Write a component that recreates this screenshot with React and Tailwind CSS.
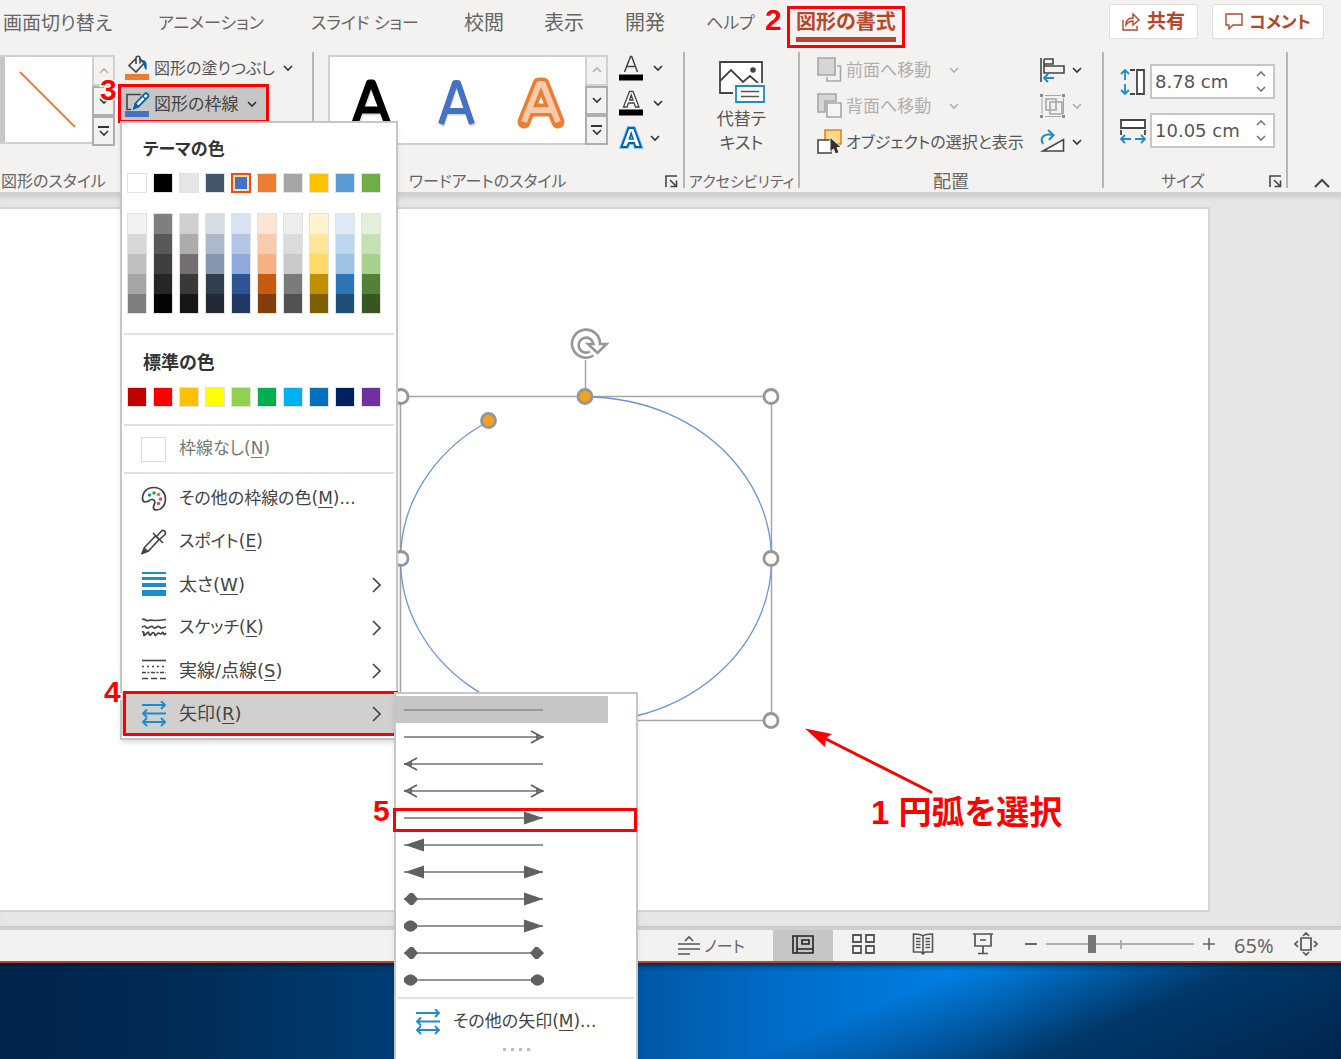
import React from "react";

const themeColors = [
  ["bg-white", "白"], ["bg-black", "黒"], ["bg-[#e7e6e6]", "薄い灰色"], ["bg-[#44546a]", "ブルーグレー"], ["bg-[#4472c4]", "青"],
  ["bg-[#ed7d31]", "オレンジ"], ["bg-[#a5a5a5]", "灰色"], ["bg-[#ffc000]", "ゴールド"], ["bg-[#5b9bd5]", "水色"], ["bg-[#70ad47]", "緑"],
];

const shades = [
  ["bg-[#f2f2f2]", "bg-[#d8d8d8]", "bg-[#bfbfbf]", "bg-[#a5a5a5]", "bg-[#7f7f7f]"],
  ["bg-[#7f7f7f]", "bg-[#595959]", "bg-[#3f3f3f]", "bg-[#262626]", "bg-[#040404]"],
  ["bg-[#d0cece]", "bg-[#aeabab]", "bg-[#757070]", "bg-[#3a3838]", "bg-[#171616]"],
  ["bg-[#d6dce4]", "bg-[#adb9ca]", "bg-[#8496b0]", "bg-[#323f4f]", "bg-[#222a35]"],
  ["bg-[#d9e2f3]", "bg-[#b4c6e7]", "bg-[#8eaadb]", "bg-[#2f5496]", "bg-[#1f3864]"],
  ["bg-[#fbe5d5]", "bg-[#f7cbac]", "bg-[#f4b183]", "bg-[#c55a11]", "bg-[#833c0b]"],
  ["bg-[#ededed]", "bg-[#dbdbdb]", "bg-[#c9c9c9]", "bg-[#7b7b7b]", "bg-[#525252]"],
  ["bg-[#fff2cc]", "bg-[#fee599]", "bg-[#ffd965]", "bg-[#bf9000]", "bg-[#7f6000]"],
  ["bg-[#deebf6]", "bg-[#bdd7ee]", "bg-[#9cc3e5]", "bg-[#2e75b5]", "bg-[#1e4e79]"],
  ["bg-[#e2efd9]", "bg-[#c5e0b3]", "bg-[#a8d08d]", "bg-[#538135]", "bg-[#375623]"],
];

const standardColors = [
  ["bg-[#c00000]", "濃い赤"], ["bg-[#ff0000]", "赤"], ["bg-[#ffc000]", "オレンジ"], ["bg-[#ffff00]", "黄"], ["bg-[#92d050]", "薄い緑"],
  ["bg-[#00b050]", "緑"], ["bg-[#00b0f0]", "薄い青"], ["bg-[#0070c0]", "青"], ["bg-[#002060]", "濃い青"], ["bg-[#7030a0]", "紫"],
];

const arrowStyles = [
  [null, null], [null, "open"], ["open", null], ["open", "open"], [null, "solid"], ["solid", null],
  ["solid", "solid"], ["diamond", "solid"], ["oval", "solid"], ["diamond", "diamond"], ["oval", "oval"],
];

function Chevron({ up = false, className = "text-[#333]" }) {
  return (
    <svg width="10" height="8" viewBox="0 0 10 8" fill="none" stroke="currentColor" strokeWidth="1.600" className={className} aria-hidden="true">
      <path d={up ? "M1 6 5 2l4 4" : "M1 2l4 4 4-4"} />
    </svg>
  );
}

function Callout({ className, children }) {
  return (
    <span className={`pointer-events-none absolute font-['Liberation_Sans',sans-serif] text-[30px] leading-[30px] font-bold text-[#ff0000] [paint-order:stroke] [-webkit-text-stroke:3px_white] ${className}`}>
      {children}
    </span>
  );
}

function Frame({ className }) {
  return <span className={`pointer-events-none absolute border-[3px] border-[#ff0000] ${className}`} />;
}

function Tab({ className, children }) {
  return (
    <button type="button" className={`shrink-0 text-left whitespace-nowrap ${className}`}>
      {children}
    </button>
  );
}

function GalleryScroll() {
  return (
    <div className="flex w-[23px] shrink-0 flex-col">
      <button type="button" aria-label="上へ" className="flex h-[31px] items-center justify-center border-2 border-[#d2d0ce]">
        <Chevron up className="text-[#b5b3b1]" />
      </button>
      <button type="button" aria-label="下へ" className="flex h-[30px] items-center justify-center border-2 border-[#b0aeac]">
        <Chevron />
      </button>
      <button type="button" aria-label="その他" className="flex h-[30px] flex-col items-center justify-center gap-[1px] border-2 border-[#b0aeac]">
        <span className="h-[2px] w-[11px] bg-[#333]" />
        <Chevron />
      </button>
    </div>
  );
}

function Launcher({ label }) {
  return (
    <button type="button" aria-label={label}>
      <svg width="13" height="13" viewBox="0 0 13 13" fill="none" stroke="#444" strokeWidth="1.6">
        <path d="M1 12V1h11M5 5l6 6M11.500 5.500v6h-6" />
      </svg>
    </button>
  );
}

function FillIcon() {
  return (
    <svg width="25" height="25" viewBox="0 0 25 25" fill="none" aria-hidden="true">
      <path d="M11 3.500 4 10.500l7 6.500 8-8.500-4.500-5.500M11 9V3.500c0-3 4-3 4 0V8.500" stroke="#444" strokeWidth="1.600" />
      <path d="M16.500 5c4-.5 6 2 5 10-2.500-1-2-4-3-6z" fill="#0063b1" />
      <path d="M0 19h24v6H0z" fill="#ed7d31" />
    </svg>
  );
}

function OutlineIcon() {
  return (
    <svg width="25" height="25" viewBox="0 0 25 25" fill="none" aria-hidden="true">
      <path d="M16 2.500H2v15h4" stroke="#444" strokeWidth="1.600" />
      <path d="M9 16.500l1.500-5L19.500 2c2-2 5 1 3.500 3l-9.500 9.500z" fill="#fff" stroke="#0063b1" strokeWidth="1.800" />
      <path d="M9 16.500l1.500-5 3 3zM17.500 4l3.500 3.500" fill="#0063b1" stroke="#0063b1" strokeWidth="1.400" />
      <path d="M0 19h24v6H0z" fill="#4472c4" />
    </svg>
  );
}

function LetterIcon({ kind }) {
  return (
    <svg width="26" height="26" viewBox="0 0 26 26" aria-hidden="true">
      {kind === "fill" && <path d="M6.500 17 12.500 1.500h1.200L19.500 17M8.500 11.500h9" fill="none" stroke="#444" strokeWidth="1.500" />}
      {kind === "outline" && <path d="M5.500 17 11.500 1.500h3.500L21 17h-3.500l-1.500-4h-5.500L9 17zM11.500 10h3.500l-1.800-5z" fill="#fff" stroke="#444" strokeWidth="1.300" />}
      {kind === "effect" && (
        <>
          <path d="M3.500 22 10.500 3h5.500l7 19h-5.500l-1.500-4h-5L9 22z" fill="none" stroke="#8cc8f5" strokeWidth="4" />
          <path d="M3.500 22 10.500 3h5.500l7 19h-5.500l-1.500-4h-5L9 22z" fill="#fff" stroke="#0063b1" strokeWidth="2" />
          <path d="M11.500 14h3.500l-1.800-5.500z" fill="#fff" stroke="#0063b1" strokeWidth="1.600" />
        </>
      )}
      {kind !== "effect" && <path d="M1 19.500h24v6H1z" fill="#000" />}
    </svg>
  );
}

function AltTextIcon() {
  return (
    <svg width="48" height="44" viewBox="0 0 48 44" fill="none" aria-hidden="true">
      <path d="M2 2h42v31H2z" fill="#fff" stroke="#444" strokeWidth="1.800" />
      <path d="M2 21 13 10l12 12 7-6 8 7" stroke="#444" strokeWidth="1.800" />
      <circle cx="35" cy="10" r="2.800" fill="#444" />
      <path d="M15 23h32v20H15z" fill="#f3f2f1" />
      <path d="M18 26h28v16H18z" fill="#fff" stroke="#1e8bcd" strokeWidth="1.800" />
      <path d="M23 31.500h18M23 36.500h18" stroke="#555" strokeWidth="1.500" />
    </svg>
  );
}

function ArrangeIcon({ kind }) {
  return (
    <svg width="25" height="26" viewBox="0 0 25 26" fill="none" strokeWidth="1.600" aria-hidden="true">
      {kind === "front" && (
        <>
          <path d="M1 1h17v17H1z" fill="#d6d6d6" stroke="#a6a6a6" />
          <path d="M20 9h3.500v15H10v-4" stroke="#a6a6a6" />
        </>
      )}
      {kind === "back" && (
        <>
          <path d="M1 1h18v7H8v11H1z" fill="#d6d6d6" stroke="#a6a6a6" />
          <path d="M10 10h14v14H10z" fill="#f5f5f5" stroke="#a6a6a6" />
        </>
      )}
      {kind === "pane" && (
        <>
          <path d="M8 1h16v14H8z" fill="#ffd98a" stroke="#e8821c" />
          <path d="M1 11h13v13H1z" fill="#fff" stroke="#444" />
          <path d="M13 8v15l3.500-3 2 5 3.500-1.500-2-5h4.500z" fill="#333" stroke="#f3f2f1" strokeWidth="1" />
        </>
      )}
      {kind === "align" && (
        <>
          <path d="M1 1v24M4 2h9v5H4M4 9h20v7H4V2" stroke="#444" />
          <path d="M14 21H4M8 17l-4 4 4 4" stroke="#1e8bcd" strokeWidth="2" />
        </>
      )}
      {kind === "group" && (
        <>
          <path d="M6 6h10v11H6zM10 9h12v12H10z" stroke="#a6a6a6" />
          <path d="M5 2.500h16M2 5v16M23.500 5v16M5 23.500h16" stroke="#a6a6a6" strokeWidth="1" />
          <path d="M0 1h3v3H0zM22 1h3v3h-3zM0 22h3v3H0zM22 22h3v3h-3z" fill="#8a8a8a" />
        </>
      )}
      {kind === "rotate" && (
        <>
          <path d="M3 22 23.500 10.500V22z" fill="#fff" stroke="#444" />
          <path d="M3 15C-1 8 5 4 13 6M8 1l5.500 5L9 11" stroke="#1e8bcd" strokeWidth="2" />
        </>
      )}
    </svg>
  );
}

function SizeIcon({ kind }) {
  return (
    <svg width="26" height="26" viewBox="0 0 26 26" fill="none" strokeWidth="1.800" aria-hidden="true">
      {kind === "height" ? (
        <>
          <path d="M17 1h7v24h-7z" fill="#fff" stroke="#444" />
          <path d="M10 1h5M10 25h5" stroke="#444" />
          <path d="M5 2v9M1 5l4-4 4 4M5 15v9M1 21l4 4 4-4" stroke="#1e8bcd" />
        </>
      ) : (
        <>
          <path d="M1 2h24v8H1z" fill="#fff" stroke="#444" />
          <path d="M1 12v5M25 12v5" stroke="#444" />
          <path d="M2 21h9M5 17l-4 4 4 4M15 21h9M21 17l4 4-4 4" stroke="#1e8bcd" />
        </>
      )}
    </svg>
  );
}

function Spinner({ id, label, kind, value }) {
  return (
    <div className="flex items-center">
      <label htmlFor={id} className="flex w-[30px]" title={label}>
        <SizeIcon kind={kind} />
      </label>
      <div className="flex h-[35px] w-[125px] border-2 border-[#c8c6c4] bg-white">
        <input id={id} aria-label={label} defaultValue={value} className="min-w-0 flex-1 pl-[3px] font-['DejaVu_Sans',sans-serif] text-[18px] text-[#555] outline-none" />
        <div className="flex w-[23px] flex-col justify-around pr-[2px]">
          <button type="button" aria-label={`${label}を増やす`} className="flex justify-center"><Chevron up className="text-[#777]" /></button>
          <button type="button" aria-label={`${label}を減らす`} className="flex justify-center"><Chevron className="text-[#777]" /></button>
        </div>
      </div>
    </div>
  );
}

function GroupLabel({ className = "justify-center text-[16px]", children }) {
  return <div className={`mt-auto flex h-[14px] items-center leading-[14px] whitespace-nowrap text-[#666] ${className}`}>{children}</div>;
}

function ArrangeRow({ kind, disabled, children, className }) {
  return (
    <button type="button" disabled={disabled} className={`flex h-[36px] items-center whitespace-nowrap ${disabled ? "text-[#b1afad]" : "text-[#555]"} ${className}`}>
      <span className="w-[29px] shrink-0"><ArrangeIcon kind={kind} /></span>
      {children}
      {disabled && <Chevron className="ml-[18px] text-[#b1afad]" />}
    </button>
  );
}

function Ribbon() {
  return (
    <div className="flex h-[142px] shrink-0 border-b-2 border-[#d4d2d0] pb-1">
      <section className="relative flex w-[314px] shrink-0 flex-col border-r-2 border-[#b8b6b4]">
        <div className="flex items-start pt-[3px]">
          <div className="flex h-[91px] w-[115px] shrink-0">
            <div className="flex h-[89px] min-w-0 flex-1 border-y-2 border-[#d2d0ce] bg-white">
              <span className="w-[5px] bg-[#c6c6c6]" />
              <svg width="86" height="85" viewBox="0 0 86 85" aria-hidden="true"><path d="M15 15 70 70" stroke="#ed7d31" strokeWidth="2" /></svg>
            </div>
            <GalleryScroll />
          </div>
          <div className="flex flex-col pl-[10px] text-[#555]">
            <button type="button" className="flex h-[30px] items-start text-[16px] whitespace-nowrap">
              <span className="w-[29px]"><FillIcon /></span>
              <span className="leading-[26px]">図形の塗りつぶし</span>
              <span className="pt-[9px] pl-[8px]"><Chevron /></span>
            </button>
            <div className="relative flex h-[38px] w-[145px] items-center">
              <span className="absolute inset-y-0 -left-[4px] w-[148px] bg-[#c6c6c6]" />
              <button type="button" aria-expanded="true" className="relative flex items-center text-[17px] whitespace-nowrap text-[#444]">
                <span className="w-[29px]"><OutlineIcon /></span>
                図形の枠線
                <Chevron className="ml-[9px] text-[#333]" />
              </button>
              <Frame className="-top-px -left-[7px] h-[39px] w-[151px]" />
            </div>
          </div>
        </div>
        <GroupLabel className="justify-start pl-[1px] text-[16px]">図形のスタイル</GroupLabel>
        <Callout className="top-[23px] left-[100px]">3</Callout>
      </section>

      <section className="flex w-[371px] shrink-0 flex-col border-r-2 border-[#b8b6b4] pl-[14px]">
        <div className="flex pt-[3px]">
          <div className="flex h-[90px] w-[280px]">
            <div className="flex h-[90px] min-w-0 flex-1 border-2 border-r-0 border-[#d2d0ce] bg-white">
              <svg width="255" height="86" viewBox="0 0 255 86" fill="none" aria-hidden="true">
                <g strokeLinejoin="round">
                  <path d="M25 66 39.500 26h3l15 40M30 53h23" stroke="#bbb" strokeWidth="7" opacity=".5" transform="translate(1 2)" />
                  <path d="M25 66 39.500 26h3l15 40M30 53h23" stroke="#000" strokeWidth="7" />
                  <path d="M111 67 125 26h3l14 41M116 54h21" stroke="#bbb" strokeWidth="5" opacity=".6" transform="translate(1 2)" />
                  <path d="M111 67 125 26h3l14 41M116 54h21" stroke="#4472c4" strokeWidth="6" />
                  <path d="M194 65 209 27h4l15 38M199 53h24" stroke="#ed7d31" strokeWidth="13" strokeLinecap="round" />
                  <path d="M194 65 209 27h4l15 38M199 53h24" stroke="#f8cbad" strokeWidth="6" />
                </g>
              </svg>
            </div>
            <GalleryScroll />
          </div>
          <div className="flex flex-col gap-[9px] pl-[10px]">
            {["fill", "outline", "effect"].map((k, i) => (
              <button key={k} type="button" aria-label={["文字の塗りつぶし", "文字の輪郭", "文字の効果"][i]} className={`flex items-center ${k === "effect" ? "gap-[6px]" : "gap-[9px]"}`}>
                <LetterIcon kind={k} /><Chevron />
              </button>
            ))}
          </div>
        </div>
        <GroupLabel className="justify-between pr-[5px] pl-[81px] text-[16px]">ワードアートのスタイル<Launcher label="ワードアートの書式設定" /></GroupLabel>
      </section>

      <section className="flex w-[115px] shrink-0 flex-col border-r-2 border-[#b8b6b4]">
        <button type="button" className="flex flex-col items-center pt-[8px] text-[17px] leading-[24px] text-[#555]">
          <AltTextIcon />
          <span className="mt-[3px]">代替テ<br />キスト</span>
        </button>
        <GroupLabel className="justify-center text-[15px]">アクセシビリティ</GroupLabel>
      </section>

      <section className="flex w-[304px] shrink-0 flex-col border-r-2 border-[#b8b6b4] px-[17px]">
        <div className="flex">
          <div className="flex w-[223px] shrink-0 flex-col">
            <ArrangeRow kind="front" disabled className="text-[17px]">前面へ移動</ArrangeRow>
            <ArrangeRow kind="back" disabled className="text-[17px]">背面へ移動</ArrangeRow>
            <ArrangeRow kind="pane" className="text-[16px]">オブジェクトの選択と表示</ArrangeRow>
          </div>
          <div className="flex flex-col">
            {["align", "group", "rotate"].map((k, i) => (
              <button key={k} type="button" aria-label={["配置", "グループ化", "回転"][i]} className="flex h-[36px] items-center gap-[7px]">
                <ArrangeIcon kind={k} /><Chevron className={k === "group" ? "text-[#b1afad]" : "text-[#333]"} />
              </button>
            ))}
          </div>
        </div>
        <GroupLabel className="justify-center text-[18px]">配置</GroupLabel>
      </section>

      <section className="flex w-[184px] shrink-0 flex-col border-r-2 border-[#b8b6b4] pl-[16px]">
        <div className="flex flex-col gap-[14px] pt-[12px]">
          <Spinner id="h" label="高さ" kind="height" value="8.78 cm" />
          <Spinner id="w" label="幅" kind="width" value="10.05 cm" />
        </div>
        <GroupLabel className="justify-between pr-[4px] pl-[41px] text-[16px]">サイズ<Launcher label="サイズと位置" /></GroupLabel>
      </section>

      <div className="flex flex-1 items-end justify-center">
        <button type="button" aria-label="リボンを折りたたむ" className="pl-[14px]">
          <svg width="16" height="10" viewBox="0 0 16 10" fill="none" stroke="#444" strokeWidth="2"><path d="M1 9l7-7 7 7" /></svg>
        </button>
      </div>
    </div>
  );
}

function Swatch({ color, label, selected }) {
  return (
    <button type="button" aria-label={label} className={`flex size-[20px] shrink-0 border border-[#e2e2e2] ${selected ? "outline-2 -outline-offset-2 outline-[#f04e16]" : ""}`}>
      <span className={`flex-1 ${color} ${selected ? "m-[1px] border-2 border-[#ffe0a0]" : ""}`} />
    </button>
  );
}

function ArrowsIcon() {
  return (
    <svg width="26" height="26" viewBox="0 0 26 26" fill="none" stroke="#1e8bcd" strokeWidth="1.900" aria-hidden="true">
      <path d="M1 4h23M20 0l4 4-4 4M25 12.500H2M6 8.500l-4 4 4 4M2 21h22M6 17l-4 4 4 4M20 17l4 4-4 4" />
    </svg>
  );
}

function MenuIcon({ kind }) {
  if (kind === "arrows") return <ArrowsIcon />;
  if (kind === "none") return <span className="block size-[25px] border border-[#ddd] bg-white" />;
  return (
    <svg width="26" height="26" viewBox="0 0 26 26" fill="none" aria-hidden="true">
      {kind === "palette" && (
        <>
          <path d="M1.500 12.500C1.500 6 6 1.500 13 1.500s11.500 5 11.500 11.500S20 24 15.500 24c-4.500 0-3-4-2-6 1-2.500-.5-5-3-4.500S7.500 16 4.500 16s-3-2-3-3.500z" stroke="#444" strokeWidth="1.700" />
          <circle cx="8.500" cy="9" r="1.800" fill="#1e8bcd" /><circle cx="13" cy="7" r="1.800" fill="#20a84a" /><circle cx="17.500" cy="8.500" r="1.800" fill="#e8761c" /><circle cx="19.500" cy="13" r="1.800" fill="#f2453d" /><circle cx="17.500" cy="17.500" r="1.800" fill="#a35bc4" />
        </>
      )}
      {kind === "dropper" && (
        <>
          <path d="M3.500 18.500 14.500 7l3.500 3.500L7.500 22 1 24.500zM12 4l10 10M16 7l4.500-5c2-2 5 1 3.500 3.500L19 10" stroke="#444" strokeWidth="1.600" />
          <path d="M3.500 18.500 7.500 22 1 24.500z" fill="#444" />
        </>
      )}
      {kind === "weight" && <path d="M1 0h24v2H1zM1 5h24v3H1zM1 11h24v4H1zM1 18h24v6H1z" fill="#1e8bcd" />}
      {kind === "sketch" && (
        <g stroke="#444" strokeWidth="1.700">
          <path d="M1 4.500c3-1.500 4 2 6.500 1s4 0 6.500 0 5 0 11-1" />
          <path d="M1 12.500c4-4 3 1.500 6 .5s3-3 5.500-.5 3-3 6-.5 3 0 6.500 0" />
          <path d="M1 17c4-1 0 5 3 3s3-5 4-1 3-3 5-1 0 4 3 1 3 2 5-1 1 5 4 0" />
        </g>
      )}
      {kind === "dash" && (
        <g stroke="#444" strokeWidth="1.600">
          <path d="M1 2.500h24" /><path d="M1 8.500h24" strokeDasharray="2 3" /><path d="M1 14.500h24" strokeDasharray="4 1.500 2 1.500" /><path d="M1 20.500h24" strokeDasharray="6 3" />
        </g>
      )}
    </svg>
  );
}

function MenuItem({ icon, text, hot, dots, submenu, className = "h-[43px] text-[17px]" }) {
  return (
    <button type="button" role="menuitem" className={`flex w-full items-center pr-[14px] pl-[19px] text-left font-['DejaVu_Sans','Noto_Sans_CJK_JP',sans-serif] whitespace-nowrap ${className}`}>
      <span className="w-[38px] shrink-0"><MenuIcon kind={icon} /></span>
      <span className="flex-1">{text}(<u className="underline-offset-[3px]">{hot}</u>){dots && "..."}</span>
      {submenu && (
        <svg width="11" height="16" viewBox="0 0 11 16" fill="none" stroke="#444" strokeWidth="1.700" aria-hidden="true"><path d="M2 1l7 7-7 7" /></svg>
      )}
    </button>
  );
}

function OutlineMenu() {
  return (
    <div role="menu" className="absolute top-[121px] left-[120px] flex w-[278px] flex-col border-2 border-[#c6c6c6] bg-white pb-[3px] text-[#444] shadow-md">
      <h2 className="mt-[13px] pl-[21px] text-[17px] leading-[26px] font-bold text-[#333]">テーマの色</h2>
      <div className="mt-[11px] flex gap-[6px] pl-[5px]">
        {themeColors.map(([c, l], i) => <Swatch key={c} color={c} label={l} selected={i === 4} />)}
      </div>
      <div className="mt-[20px] flex gap-[6px] pl-[5px]">
        {shades.map((col, i) => (
          <div key={i} className="flex w-[20px] shrink-0 flex-col border border-[#e2e2e2]">
            {col.map((c, j) => <button key={j} type="button" aria-label={`${themeColors[i][1]} ${j + 1}`} className={`h-[20px] last:h-[19px] ${c}`} />)}
          </div>
        ))}
      </div>
      <hr className="mx-[2px] mt-[19px] border-t-2 border-[#e1e1e1]" />
      <h2 className="mt-[14px] pl-[21px] text-[18px] leading-[26px] font-bold text-[#333]">標準の色</h2>
      <div className="mt-[12px] flex gap-[6px] pl-[5px]">
        {standardColors.map(([c, l]) => <Swatch key={c} color={c} label={l} />)}
      </div>
      <hr className="mx-[2px] mt-[17px] border-t-2 border-[#e1e1e1]" />
      <MenuItem icon="none" text="枠線なし" hot="N" className="h-[46px] text-[17px] text-[#777]" />
      <hr className="mx-[2px] border-t-2 border-[#e1e1e1]" />
      <div className="flex flex-col pt-[3px]">
        <MenuItem icon="palette" text="その他の枠線の色" hot="M" dots />
        <MenuItem icon="dropper" text="スポイト" hot="E" />
        <MenuItem icon="weight" text="太さ" hot="W" submenu className="h-[43px] text-[18px]" />
        <MenuItem icon="sketch" text="スケッチ" hot="K" submenu />
        <MenuItem icon="dash" text="実線/点線" hot="S" submenu className="h-[43px] text-[18px]" />
        <div className="relative">
          <MenuItem icon="arrows" text="矢印" hot="R" submenu className="h-[43px] bg-[#d2d0ce] text-[18px]" />
          <Frame className="top-[-1px] left-[1px] h-[45px] w-[275px]" />
          <Callout className="top-[-15px] left-[-18px]">4</Callout>
        </div>
      </div>
    </div>
  );
}

function ArrowEnd({ kind, flip }) {
  return (
    <g transform={flip ? "translate(140 0) scale(-1 1)" : undefined}>
      {kind === "open" && <path d="M13 4 2 10l11 6M1 10l6-2v4z" fill="none" stroke="#606060" strokeWidth="1.700" />}
      {kind === "solid" && <path d="M1 10 20 3.500v13z" fill="#606060" />}
      {kind === "diamond" && <path d="M0 10l6-6h3l5 6-5 6H6z" fill="#606060" />}
      {kind === "oval" && <path d="M3 5.500C4 4 9 4 10 5.500L13 8v4l-3 2.500C9 16 4 16 3 14.500L0 12V8z" fill="#606060" />}
    </g>
  );
}

function ArrowMenu() {
  return (
    <div role="menu" className="absolute top-[692px] left-[394px] flex w-[244px] flex-col border-2 border-[#c6c6c6] bg-white pt-[2px] text-[#444] shadow-md">
      {arrowStyles.map(([start, end], i) => (
        <button key={i} type="button" role="menuitem" aria-label={`矢印スタイル ${i + 1}`} className="relative flex h-[27px] items-center">
          <span className={`flex h-[27px] w-[212px] items-center pl-[8px] ${i === 0 ? "bg-[#c6c6c6]" : ""}`}>
            <svg width="140" height="20" viewBox="0 0 140 20" aria-hidden="true">
              <path d="M0 10h139" stroke={i === 0 ? "#8a8a8a" : "#707070"} strokeWidth="1.500" />
              {start && <ArrowEnd kind={start} />}
              {end && <ArrowEnd kind={end} flip />}
            </svg>
          </span>
          {i === 4 && <Frame className="top-[4px] -left-[3px] h-[24px] w-[244px]" />}
          {i === 4 && <Callout className="top-[-8px] left-[-23px]">5</Callout>}
        </button>
      ))}
      <hr className="mx-[2px] mt-[4px] border-t-2 border-[#e1e1e1]" />
      <MenuItem icon="arrows" text="その他の矢印" hot="M" dots className="h-[46px] text-[17px]" />
      <div className="flex h-[15px] justify-center gap-[5px] pt-[3px]">
        {[0, 1, 2, 3].map((n) => <span key={n} className="size-[3px] bg-[#b5bcc6]" />)}
      </div>
    </div>
  );
}

function Handle({ x, y, fill = "#fff" }) {
  return <circle cx={x} cy={y} r="7" fill={fill} stroke="#969696" strokeWidth="2.800" />;
}

function Slide() {
  return (
    <main className="relative flex min-h-[732px] flex-1 border-b border-[#c8c8c8] bg-[#e6e6e6] pt-[13px] pr-[131px] pb-[14px] shadow-[inset_0_6px_6px_-4px_#c4c4c4]">
      <div className="relative flex-1 border-2 border-l-0 border-[#d4d4d4] bg-white">
        <svg className="absolute top-[109px] left-[386px]" width="410" height="420" viewBox="386 318 410 420" fill="none" aria-hidden="true">
          <path d="M400.500 396.500h371v324h-371zM585.500 360v36" stroke="#a6a6a6" strokeWidth="1.500" />
          <path d="M587 397A185.500 162.500 0 1 1 489 421" stroke="#6a94d8" strokeWidth="1.300" />
          <path d="M593.500 355.500A14 14 0 1 1 600 344h6.500l-9 9-9.500-9h5.500A7.500 7.500 0 1 0 590 351.500" stroke="#969696" strokeWidth="2.600" />
          <Handle x={401} y={396.500} /><Handle x={771} y={396.500} /><Handle x={401} y={558.500} /><Handle x={771} y={558.500} /><Handle x={771} y={720.500} />
          <Handle x={585} y={396.500} fill="#f5a11d" /><Handle x={488.500} y={420.500} fill="#f5a11d" />
        </svg>
        <svg className="pointer-events-none absolute top-[517px] left-[800px]" width="140" height="72" viewBox="800 725 140 72" aria-hidden="true">
          <path d="M822 736 931 791" stroke="#ff0000" strokeWidth="3" strokeLinecap="round" />
          <path d="M805 727.500 832 733l-6 4-1 9z" fill="#ff0000" />
        </svg>
        <p className="absolute top-[584px] left-[871px] font-['Liberation_Sans','Noto_Sans_CJK_JP',sans-serif] text-[33px] leading-[40px] font-bold whitespace-nowrap text-[#ff0000]">1 円弧を選択</p>
      </div>
    </main>
  );
}

function StatusBar() {
  return (
    <footer className="flex h-[36px] shrink-0 items-stretch justify-end border-t-3 border-b-2 border-t-[#cfcfcf] border-b-[#b7472a] bg-[#f3f2f1] pr-[23px] text-[#666]">
      <button type="button" className="mr-[28px] flex items-center gap-[3px] text-[16px]">
        <svg width="24" height="22" viewBox="0 0 24 22" fill="none" stroke="#555" strokeWidth="1.700" aria-hidden="true"><path d="M8 6l4-4 4 4M1 9h22M1 14h22M1 19h12" /></svg>
        ノート
      </button>
      <button type="button" aria-label="標準" aria-pressed="true" className="flex w-[60px] items-center justify-center bg-[#c6c6c6] pb-[3px]">
        <svg width="22" height="19" viewBox="0 0 22 19" fill="none" stroke="#222" strokeWidth="1.600"><path d="M1 1h20v17H1zM5 1v17M5 14h16M10 5h7v4h-7z" /></svg>
      </button>
      <button type="button" aria-label="スライド一覧" className="flex w-[60px] items-center justify-center pb-[3px]">
        <svg width="23" height="20" viewBox="0 0 23 20" fill="none" stroke="#555" strokeWidth="1.800"><path d="M1 1h8v7H1zM14 1h8v7h-8zM1 12h8v7H1zM14 12h8v7h-8z" /></svg>
      </button>
      <button type="button" aria-label="閲覧表示" className="flex w-[60px] items-center justify-center pb-[4px]">
        <svg width="22" height="22" viewBox="0 0 22 22" fill="none" stroke="#555" strokeWidth="1.600"><path d="M11 3C9 1 5 1 1.500 1v18H9l2 2 2-2h7.500V1C17 1 13 1 11 3zV20M4 5.500h4.500M4 8.500h4.500M4 11.500h4.500M4 14.500h4.500M13.500 5.500H18M13.500 8.500H18M13.500 11.500H18M13.500 14.500H18" /></svg>
      </button>
      <button type="button" aria-label="スライド ショー" className="flex w-[60px] items-center justify-center pb-[3px]">
        <svg width="20" height="22" viewBox="0 0 20 22" fill="none" stroke="#555" strokeWidth="1.700"><path d="M0 1h20M2 1v12h16V1M7 7h6M10 13v7M5 20.500h10" /></svg>
      </button>
      <button type="button" aria-label="縮小" className="ml-[12px] flex items-center pb-[3px]"><span className="h-[2px] w-[12px] bg-[#666]" /></button>
      <div className="relative ml-[9px] flex items-center pb-[3px]">
        <input type="range" min="0" max="100" defaultValue="30" aria-label="ズーム" className="h-[18px] w-[148px] appearance-none bg-transparent [&::-webkit-slider-runnable-track]:h-[2px] [&::-webkit-slider-runnable-track]:bg-[#b0aeac] [&::-webkit-slider-thumb]:-mt-[8px] [&::-webkit-slider-thumb]:h-[18px] [&::-webkit-slider-thumb]:w-[8px] [&::-webkit-slider-thumb]:appearance-none [&::-webkit-slider-thumb]:bg-[#777]" />
        <span className="pointer-events-none absolute left-1/2 h-[9px] w-[2px] bg-[#b0aeac]" />
      </div>
      <button type="button" aria-label="拡大" className="ml-[9px] flex items-center pb-[3px]">
        <svg width="12" height="12" viewBox="0 0 12 12" stroke="#666" strokeWidth="1.600"><path d="M0 6h12M6 0v12" /></svg>
      </button>
      <button type="button" className="ml-[19px] w-[60px] text-left text-[20px] leading-[20px]">65%</button>
      <button type="button" aria-label="ウィンドウに合わせる" className="flex items-center pb-[4px]">
        <svg width="24" height="24" viewBox="0 0 24 24" fill="none" stroke="#555" strokeWidth="1.700"><path d="M7 6h10v12H7zM9 4l3-3 3 3M9 20l3 3 3-3M4 9l-3 3 3 3M20 9l3 3-3 3" /></svg>
      </button>
    </footer>
  );
}

export default function App() {
  return (
    <div className="relative flex min-h-screen flex-col overflow-hidden bg-[#f3f2f1] font-['Noto_Sans','Noto_Sans_CJK_JP',sans-serif] [font-feature-settings:'palt']">
      <header className="flex h-[52px] shrink-0 items-start pt-[4px] pr-[17px] pl-[3px]">
        <nav className="flex text-[17px] leading-[36px] text-[#666]">
          <Tab className="w-[155px] text-[19px]">画面切り替え</Tab>
          <Tab className="w-[153px]">アニメーション</Tab>
          <Tab className="w-[153px]">スライド ショー</Tab>
          <Tab className="w-[80px] text-[20px]">校閲</Tab>
          <Tab className="w-[81px] text-[20px]">表示</Tab>
          <Tab className="w-[81px] text-[20px]">開発</Tab>
          <Tab className="w-[90px]">ヘルプ</Tab>
          <div className="relative">
            <Tab className="h-[38px] border-b-[5px] border-[#b7472a] text-[20px] font-bold text-[#b7472a]">図形の書式</Tab>
            <Frame className="-inset-x-[9px] top-[2px] h-[42px]" />
            <Callout className="top-px left-[-31px]">2</Callout>
          </div>
        </nav>
        <div className="ml-auto flex gap-[14px] font-bold text-[#b7472a]">
          <button type="button" className="flex h-[35px] w-[89px] items-center justify-center gap-[6px] rounded-[2px] border border-[#e1dfdd] bg-white text-[19px]">
            <svg width="19" height="19" viewBox="0 0 19 19" fill="none" stroke="currentColor" strokeWidth="1.400" aria-hidden="true"><path d="M1 8v10h14v-4M4 13c0-5 3-7 7-7V2l6 6-6 5v-4c-3 0-5 1-7 4z" /></svg>
            共有
          </button>
          <button type="button" className="flex h-[35px] w-[112px] items-center justify-center gap-[6px] rounded-[2px] border border-[#e1dfdd] bg-white text-[17px]">
            <svg width="18" height="17" viewBox="0 0 18 17" fill="none" stroke="currentColor" strokeWidth="1.400" aria-hidden="true"><path d="M1 1h16v11H8l-4 4v-4H1z" /></svg>
            コメント
          </button>
        </div>
      </header>
      <Ribbon />
      <Slide />
      <StatusBar />
      <div className="h-[96px] shrink-0 bg-[linear-gradient(157deg,transparent_62%,#00386a_80%,#00264d_100%),linear-gradient(90deg,#00244a_0%,#002c56_14%,#003d75_29%,#0056a4_47%,#006cc8_58%,#0084ea_74%)] shadow-[inset_0_6px_6px_-4px_#001c3a]" />
      <OutlineMenu />
      <ArrowMenu />
    </div>
  );
}
